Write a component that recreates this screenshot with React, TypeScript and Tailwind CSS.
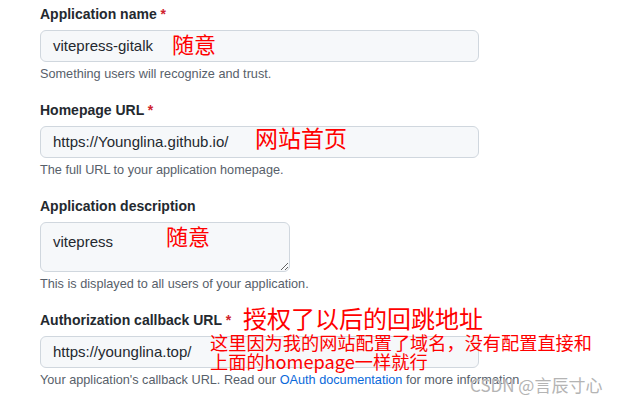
import React from "react";

const sans = { fontFamily: '"Liberation Sans", Arial, sans-serif' };
const cjk = { fontFamily: '"Noto Sans CJK SC", "Noto Sans", sans-serif' };

function Label({ text, required }: { text: string; required?: boolean }) {
  return (
    <div className="h-[20px] text-[14px] leading-[20px] font-bold text-[#24292f]">
      {text}
      {required && <span className="text-[#cf222e]"> *</span>}
    </div>
  );
}

function Field({ value }: { value: string }) {
  return (
    <div className="flex h-[32px] w-[439px] items-center rounded-[6px] border border-[#d0d7de] bg-[#f6f8fa] pl-[12px] text-[15px] text-[#24292f]">
      {value}
    </div>
  );
}

function Help({ children }: { children: React.ReactNode }) {
  return <div className="h-[18px] whitespace-nowrap text-[12.7px] leading-[18px] text-[#57606a]">{children}</div>;
}

function Group({ children }: { children: React.ReactNode }) {
  return <div className="flex flex-col gap-[3px]">{children}</div>;
}

export default function App() {
  return (
    <div className="relative h-[404px] w-[622px] overflow-hidden bg-white" style={sans}>
      <div className="flex flex-col gap-[17px] pl-[40px] pt-[4px]">
        <Group>
          <div className="flex flex-col gap-[6px]">
            <Label text="Application name" required />
            <Field value="vitepress-gitalk" />
          </div>
          <Help>Something users will recognize and trust.</Help>
        </Group>
        <Group>
          <div className="flex flex-col gap-[6px]">
            <Label text="Homepage URL" required />
            <Field value="https://Younglina.github.io/" />
          </div>
          <Help>The full URL to your application homepage.</Help>
        </Group>
        <Group>
          <div className="flex flex-col gap-[6px]">
            <Label text="Application description" />
            <textarea
              readOnly
              value="vitepress"
              className="block h-[50px] w-[250px] rounded-[6px] border border-[#d0d7de] bg-[#f6f8fa] px-[12px] pt-[9px] text-[15px] leading-[20px] text-[#24292f] outline-none"
              style={sans}
            />
          </div>
          <Help>This is displayed to all users of your application.</Help>
        </Group>
        <Group>
          <div className="flex flex-col gap-[6px]">
            <Label text="Authorization callback URL" required />
            <Field value="https://younglina.top/" />
          </div>
          <Help>
            Your application's callback URL. Read our{" "}
            <span className="text-[#0969da]">OAuth documentation</span> for more information.
          </Help>
        </Group>
      </div>

      <div className="absolute left-[172px] top-[32px] text-[22px] leading-[22px] text-[#ff0000]" style={cjk}>
        随意
      </div>
      <div className="absolute left-[255px] top-[126px] text-[23px] leading-[23px] text-[#ff0000]" style={cjk}>
        网站首页
      </div>
      <div className="absolute left-[166px] top-[224px] text-[22px] leading-[22px] text-[#ff0000]" style={cjk}>
        随意
      </div>
      <div className="absolute left-[243px] top-[306px] text-[24px] leading-[24px] text-[#ff0000]" style={cjk}>
        授权了以后的回跳地址
      </div>
      <div className="absolute left-[210px] top-[333px] text-[18.2px] leading-[19px] text-[#ff0000]" style={cjk}>
        <div>这里因为我的网站配置了域名，没有配置直接和</div>
        <div>上面的homepage一样就行</div>
      </div>
      <div
        className="absolute left-[470px] top-[376px] text-[17px] leading-[17px] text-[#b4b4b4]"
        style={{ ...cjk, textShadow: "0 0 1px #ffffff" }}
      >
        CSDN @言辰寸心
      </div>
    </div>
  );
}
